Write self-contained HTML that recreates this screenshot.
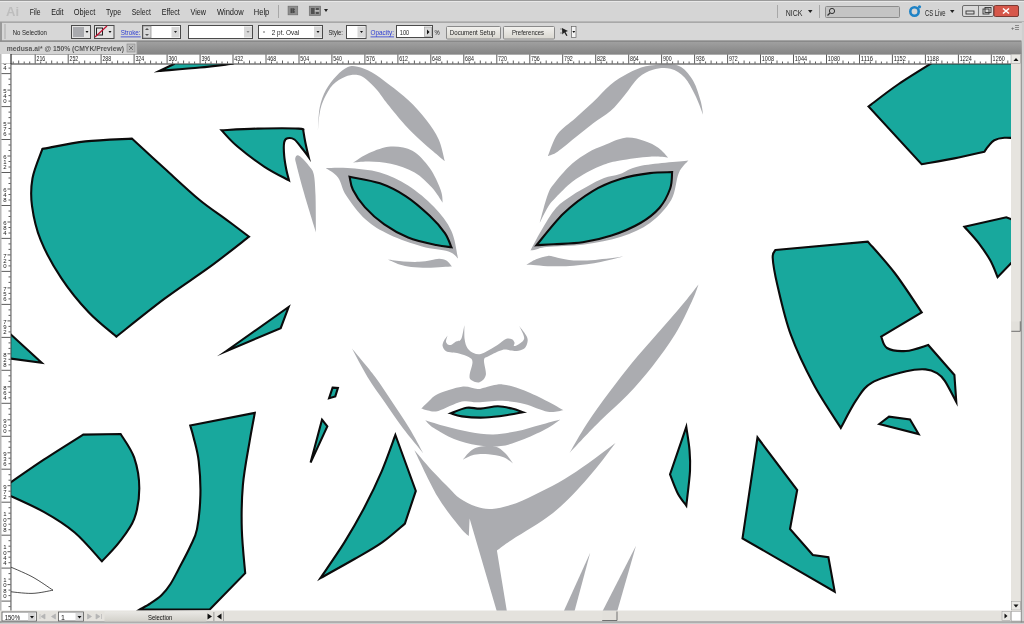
<!DOCTYPE html><html><head><meta charset="utf-8"><style>html,body{margin:0;padding:0;width:1024px;height:624px;overflow:hidden;background:#d6d6d6}svg{display:block}text{font-family:"Liberation Sans",sans-serif}svg{will-change:transform}</style></head><body><svg width="1024" height="624" viewBox="0 0 1024 624"><defs><clipPath id="cv"><rect x="11" y="64" width="1000" height="547"/></clipPath><linearGradient id="tabg" x1="0" y1="0" x2="0" y2="1"><stop offset="0" stop-color="#a3a3a3"/><stop offset="1" stop-color="#858585"/></linearGradient><linearGradient id="btn" x1="0" y1="0" x2="0" y2="1"><stop offset="0" stop-color="#f2f1ee"/><stop offset="1" stop-color="#d9d7d0"/></linearGradient><linearGradient id="stat" x1="0" y1="0" x2="0" y2="1"><stop offset="0" stop-color="#e9e8e4"/><stop offset="1" stop-color="#d2d0ca"/></linearGradient></defs><rect x="0" y="0" width="1024" height="22" fill="#d5d5d5"/><rect x="0" y="0" width="1024" height="1" fill="#9a9a9a"/><rect x="0" y="1" width="1024" height="1" fill="#e8e8e8"/><text x="6" y="16" font-size="13" fill="#bdbdbd" font-weight="bold">Ai</text><text x="29.7" y="14.8" font-size="8.8" fill="#1a1a1a" textLength="10.9" lengthAdjust="spacingAndGlyphs">File</text><text x="51.2" y="14.8" font-size="8.8" fill="#1a1a1a" textLength="12.3" lengthAdjust="spacingAndGlyphs">Edit</text><text x="73.8" y="14.8" font-size="8.8" fill="#1a1a1a" textLength="21.5" lengthAdjust="spacingAndGlyphs">Object</text><text x="106" y="14.8" font-size="8.8" fill="#1a1a1a" textLength="15.0" lengthAdjust="spacingAndGlyphs">Type</text><text x="131.8" y="14.8" font-size="8.8" fill="#1a1a1a" textLength="19.0" lengthAdjust="spacingAndGlyphs">Select</text><text x="161.7" y="14.8" font-size="8.8" fill="#1a1a1a" textLength="18.0" lengthAdjust="spacingAndGlyphs">Effect</text><text x="190.5" y="14.8" font-size="8.8" fill="#1a1a1a" textLength="15.5" lengthAdjust="spacingAndGlyphs">View</text><text x="216.9" y="14.8" font-size="8.8" fill="#1a1a1a" textLength="26.7" lengthAdjust="spacingAndGlyphs">Window</text><text x="253.8" y="14.8" font-size="8.8" fill="#1a1a1a" textLength="15.5" lengthAdjust="spacingAndGlyphs">Help</text><rect x="278" y="5" width="1" height="13" fill="#a8a8a8"/><rect x="288.1" y="6.2" width="9.6" height="8.6" fill="#8e8e8e" stroke="#6e6e6e" stroke-width="0.7"/><rect x="290.5" y="8.3" width="2" height="4.8" fill="#4a4a4a"/><path d="M292.5,8.3h1.5l1,1.2l-1,1.2l1.2,1.2l-1.2,1.2h-1.5z" fill="#4a4a4a"/><rect x="309.3" y="6.2" width="11.3" height="9.2" fill="#8e8e8e" stroke="#6e6e6e" stroke-width="0.7"/><rect x="311" y="8" width="3.6" height="6" fill="#505050"/><rect x="316" y="8" width="2.8" height="2.2" fill="#505050"/><rect x="316" y="11.8" width="2.8" height="2.2" fill="#505050"/><rect x="314.8" y="10.4" width="4.5" height="1" fill="#dcdcdc"/><path d="M324,9h4l-2,3z" fill="#222"/><rect x="777" y="5" width="1" height="13" fill="#a8a8a8"/><text x="785.8" y="15.5" font-size="8.8" fill="#2a2a2a" textLength="16.7" lengthAdjust="spacingAndGlyphs">NICK</text><path d="M808,10h4.5l-2.25,3z" fill="#222"/><rect x="819" y="5" width="1" height="13" fill="#a8a8a8"/><rect x="825.5" y="6.5" width="74" height="11" rx="1" fill="#c4c4c4" stroke="#8c8c8c" stroke-width="1"/><circle cx="832" cy="11" r="2.6" fill="none" stroke="#333" stroke-width="1"/><path d="M830,13l-2.5,2.5" stroke="#333" stroke-width="1.2"/><circle cx="914.5" cy="11.5" r="4.2" fill="none" stroke="#1f83c6" stroke-width="2.6"/><circle cx="919.5" cy="6.8" r="1.6" fill="#1f83c6"/><text x="925" y="15.5" font-size="8.5" fill="#1e1e1e" textLength="20.6" lengthAdjust="spacingAndGlyphs">CS Live</text><path d="M950,10h4.5l-2.25,3z" fill="#222"/><rect x="962.5" y="5.5" width="31" height="11" rx="1.5" fill="#d8d8d8" stroke="#6a6a6a"/><rect x="978" y="6" width="1" height="10" fill="#777"/><rect x="966" y="11" width="8" height="3" fill="none" stroke="#333" stroke-width="0.9"/><rect x="983" y="9" width="6" height="5" fill="none" stroke="#333" stroke-width="0.9"/><rect x="985" y="7.5" width="6" height="5" fill="none" stroke="#333" stroke-width="0.9"/><rect x="994" y="5.5" width="24.5" height="11" rx="1.5" fill="#d6574a" stroke="#7a3a33"/><path d="M1003,8.5l6,5M1009,8.5l-6,5" stroke="#fff" stroke-width="1.6"/><rect x="0" y="22" width="1024" height="19" fill="#d7d7d7"/><rect x="0" y="21.6" width="1024" height="1" fill="#8a8a8a"/><rect x="0" y="22" width="2" height="19" fill="#9a9a9a"/><rect x="4" y="24" width="2" height="15" fill="#c2c2c2"/><text x="12.7" y="34.8" font-size="7.6" fill="#1e1e1e" textLength="34.2" lengthAdjust="spacingAndGlyphs">No Selection</text><rect x="71.5" y="25.5" width="19" height="13" fill="#e3e3e3" stroke="#4a4a4a"/><rect x="73" y="27" width="11" height="10" fill="#a9aaae"/><path d="M85.5,31h3l-1.5,2z" fill="#111"/><rect x="94.5" y="25.5" width="19.5" height="13" fill="#e3e3e3" stroke="#4a4a4a"/><rect x="96.5" y="28" width="6" height="7" fill="none" stroke="#222" stroke-width="1"/><path d="M95,37 L107,26" stroke="#c01030" stroke-width="1.2"/><path d="M108.5,31h3l-1.5,2z" fill="#111"/><text x="120.7" y="34.8" font-size="7.6" fill="#2b3bd3" textLength="19.9" lengthAdjust="spacingAndGlyphs">Stroke:</text><rect x="120.7" y="36.5" width="20" height="0.8" fill="#2b3bd3"/><rect x="142.5" y="25.5" width="38" height="13" fill="#fff" stroke="#4a4a4a"/><rect x="143" y="26" width="8" height="12" fill="#d8d8d8" stroke="#777" stroke-width="0.6"/><path d="M145,30h4l-2,-2zM145,34h4l-2,2z" fill="#555"/><rect x="171.5" y="27" width="8" height="10.5" fill="#d8d8d8"/><path d="M174,31h3l-1.5,2z" fill="#222"/><rect x="188.5" y="25.5" width="64" height="13" fill="#fff" stroke="#4a4a4a"/><rect x="244" y="26.5" width="8" height="11" fill="#d8d8d8"/><path d="M246.5,31h3l-1.5,2z" fill="#888"/><rect x="258.5" y="25.5" width="64" height="13" fill="#fff" stroke="#4a4a4a"/><circle cx="264" cy="32" r="0.8" fill="#555"/><text x="271.8" y="34.8" font-size="7.6" fill="#1e1e1e" textLength="27.3" lengthAdjust="spacingAndGlyphs">2 pt. Oval</text><rect x="314" y="26.5" width="8" height="11" fill="#d8d8d8"/><path d="M316.5,31h3l-1.5,2z" fill="#111"/><text x="328.4" y="34.8" font-size="7.6" fill="#1e1e1e" textLength="14.6" lengthAdjust="spacingAndGlyphs">Style:</text><rect x="346.5" y="25.5" width="19.5" height="13" fill="#fff" stroke="#4a4a4a"/><rect x="357.5" y="26.5" width="8" height="11" fill="#d8d8d8"/><path d="M360,31h3l-1.5,2z" fill="#111"/><text x="370.5" y="34.8" font-size="7.6" fill="#2b3bd3" textLength="23.5" lengthAdjust="spacingAndGlyphs">Opacity:</text><rect x="370.5" y="36.5" width="23.5" height="0.8" fill="#2b3bd3"/><rect x="396.5" y="25.5" width="36" height="12" fill="#fff" stroke="#4a4a4a"/><text x="399.8" y="34.5" font-size="7.3" fill="#1e1e1e" textLength="9.4" lengthAdjust="spacingAndGlyphs">100</text><rect x="424.5" y="27" width="7" height="9.5" fill="#d8d8d8" stroke="#888" stroke-width="0.5"/><path d="M427,29.5v5l2.5,-2.5z" fill="#111"/><text x="434.5" y="34.8" font-size="7.6" fill="#1e1e1e" textLength="5.2" lengthAdjust="spacingAndGlyphs">%</text><rect x="446.5" y="26.5" width="54" height="12.5" rx="1" fill="url(#btn)" stroke="#8a8a8a"/><text x="449.8" y="35.3" font-size="7.6" fill="#1e1e1e" textLength="45.7" lengthAdjust="spacingAndGlyphs">Document Setup</text><rect x="503.5" y="26.5" width="51" height="12.5" rx="1" fill="url(#btn)" stroke="#8a8a8a"/><text x="511.9" y="35.3" font-size="7.6" fill="#1e1e1e" textLength="32.1" lengthAdjust="spacingAndGlyphs">Preferences</text><path d="M562,28l6,3l-2.5,1l2,3.5l-1.2,.6l-2,-3.5l-2,2z" fill="#222"/><path d="M560,29h2M560,33h2" stroke="#777" stroke-width="0.8"/><rect x="571.5" y="26.5" width="4.5" height="11" fill="#f4f4f4" stroke="#666" stroke-width="0.7"/><path d="M572.3,31h3l-1.5,2z" fill="#111"/><text x="1011" y="29.5" font-size="6" fill="#555">+</text><path d="M1015,25.5h4M1015,27.5h4M1015,29.5h4" stroke="#666" stroke-width="0.7"/><rect x="0" y="40.5" width="1024" height="13.5" fill="url(#tabg)"/><rect x="0" y="41.5" width="137" height="12.5" fill="#d3d3d3"/><rect x="0" y="40.6" width="1021" height="1" fill="#7a7a7a"/><rect x="136.5" y="41.5" width="0.8" height="12.5" fill="#a0a0a0"/><text x="6.8" y="51" font-size="8" fill="#565656" font-weight="bold" textLength="117.2" lengthAdjust="spacingAndGlyphs">medusa.ai* @ 150% (CMYK/Preview)</text><rect x="127" y="44" width="8" height="8" fill="#bbb" stroke="#888" stroke-width="0.6"/><path d="M129,46l4,4M133,46l-4,4" stroke="#666" stroke-width="0.8"/><rect x="0" y="54" width="1024" height="570" fill="#fff"/><g clip-path="url(#cv)"><path d="M317.9,130.5C318.2,126.7 318.4,114.3 319.7,107.6C321,100.8 323.1,95.3 325.9,90C328.7,84.7 332.7,79.7 336.4,75.9C340.1,72.1 344.4,68.5 347.9,67C351.4,65.5 353.6,65.8 357.6,66.7C361.6,67.6 366.4,69.3 371.7,72.3C377,75.3 383.1,80 389.3,84.7C395.5,89.4 402.5,94.6 408.7,100.5C414.9,106.4 421.3,113.4 426.3,119.9C431.3,126.4 435.5,132.4 438.6,139.3C441.7,146.2 443.8,157.6 444.8,161.3C442.9,159.7 437.6,155.3 433.3,151.6C429.1,147.9 424,143.7 419.3,139.3C414.6,134.9 410.5,131.1 405.2,125.2C399.9,119.3 392.2,109.9 387.5,104C382.8,98.1 380.5,94.1 377,90C373.5,85.9 369.6,81.9 366.4,79.4C363.2,76.9 361.1,75.5 357.6,75C354.1,74.5 349.3,75.1 345.2,76.7C341.1,78.3 336.4,81 332.9,84.7C329.4,88.4 326.3,94.1 324.1,98.8C321.9,103.5 320.7,107.6 319.7,112.9C318.7,118.2 318.2,127.6 317.9,130.5Z" fill="#abacb0"/><path d="M352.9,162.7C355.6,161.1 362.8,155.7 369.1,153C375.4,150.3 383.6,146.9 390.8,146.5C398,146.1 405.9,147.2 412.4,150.8C418.9,154.4 425,161.6 429.7,168.1C434.4,174.6 438.4,184 440.6,189.8C442.8,195.6 442.4,200.6 442.7,202.8C440.9,200.3 436.6,192.7 431.9,187.6C427.2,182.5 421.5,176.5 414.6,172.5C407.8,168.5 398.4,165.6 390.8,163.8C383.2,162 375.4,161.8 369.1,161.6C362.8,161.4 355.6,162.5 352.9,162.7Z" fill="#abacb0"/><path d="M325.8,168.1C329.4,168.1 338.5,167.4 347.5,168.1C356.5,168.8 369.9,169.6 380,172.5C390.1,175.4 399.1,179.7 408.1,185.5C417.1,191.3 426.9,199.5 434.1,207.1C441.3,214.7 447.4,222.4 451.4,231C455.4,239.6 456.9,253.9 458,258.5C456.4,257.3 454.5,253.5 448.5,251.5C442.5,249.5 431.8,249.3 422,246.5C412.2,243.7 399,239.3 389.6,234.8C380.2,230.3 372.8,226.2 365.6,219.6C358.4,213 350.8,202.5 346.2,195.5C341.6,188.5 341.4,182.1 338,177.5C334.6,172.9 327.8,169.7 325.8,168.1Z" fill="#abacb0"/><path d="M387.8,259.5C390.4,259.8 398.2,261 403.4,261.4C408.6,261.8 414.4,262 419,261.8C423.6,261.6 427.4,260.7 430.8,260.2C434.2,259.7 436.8,258.6 439.4,258.7C442,258.8 444.3,259.3 446.4,260.6C448.5,261.9 451,265.5 451.9,266.5C450.3,266.6 446.7,266.7 442.5,266.9C438.3,267.1 432.1,267.7 426.9,267.7C421.7,267.7 415.8,267.4 411.2,266.9C406.7,266.4 403.4,265.7 399.5,264.5C395.6,263.3 389.8,260.3 387.8,259.5Z" fill="#abacb0"/><path d="M547.9,156.1C549.5,152.4 553,140.4 557.6,134.1C562.2,127.8 569.4,123.5 575.3,118.2C581.2,112.9 587,107.9 592.9,102.3C598.8,96.7 604.6,89.5 610.5,84.7C616.4,79.9 622.3,76.3 628.2,73.2C634.1,70.1 639.3,67.7 645.8,66.2C652.3,64.7 661.1,64.3 667,64.4C672.9,64.5 676.7,64.2 681.1,67C685.5,69.8 690.2,75.6 693.4,81.2C696.6,86.8 698.9,95 700.5,100.6C702.1,106.2 702.7,112.3 703.1,114.7C701.8,111.5 698.3,101.5 695.2,95.3C692.1,89.1 688.7,82 684.6,77.6C680.5,73.2 675.8,70.1 670.5,68.8C665.2,67.5 658.2,68.2 652.9,69.7C647.6,71.2 643.4,73.3 638.7,77.6C634,81.9 629.3,89.7 624.6,95.3C619.9,100.9 615.8,106.4 610.5,111.1C605.2,115.8 598.8,119.1 592.9,123.5C587,127.9 581.2,132.9 575.3,137.6C569.4,142.3 562.2,148.6 557.6,151.7C553,154.8 549.5,155.4 547.9,156.1Z" fill="#abacb0"/><path d="M539.7,222.8C541.1,218 545.3,201 548,194.1C550.7,187.2 552,186.4 556,181.3C560,176.2 566.6,168.5 572,163.7C577.4,158.9 582.8,155.5 588.1,152.4C593.5,149.3 597.9,147.6 604.1,145.2C610.3,142.8 618.5,138.4 625.2,137.7C631.9,137 638.9,139.2 644.5,140.9C650.1,142.6 654.6,145.1 658.6,147.9C662.6,150.7 666.7,156 668.3,157.6C665.2,157.4 657.8,156.2 649.8,156.7C641.8,157.2 627.6,159.1 620,160.4C612.4,161.7 609.4,162.6 604.1,164.5C598.8,166.4 593.5,168.8 588.1,171.7C582.8,174.6 577.4,177.8 572,182.1C566.6,186.4 560,193.2 556,197.3C552,201.4 550.7,202.7 548,206.9C545.3,211.2 541.1,220.2 539.7,222.8Z" fill="#abacb0"/><path d="M530.5,250.5C532.2,247.2 536.8,238.1 541,231C545.2,223.9 550.8,213.9 556,208C561.2,202.1 566.6,199.2 572,195.5C577.4,191.8 582.8,188.9 588.1,186C593.5,183.1 598.8,180.1 604.1,178.1C609.4,176.1 614,176.1 620,174.1C626,172.1 628.7,168.2 640.1,166C651.5,163.8 680.4,161.5 688.4,160.6C686.8,162.7 681.7,166.4 678.8,173C675.9,179.6 676,191.7 671.2,200C666.4,208.3 658.3,216.9 650,223C641.7,229.1 632.1,233.2 621.2,236.8C610.3,240.4 596.8,242.8 584.4,244.5C572,246.2 555,246.2 546.9,247C538.8,247.8 538.7,248.9 536,249.5C533.3,250.1 531.4,250.3 530.5,250.5Z" fill="#abacb0"/><path d="M526.4,264.7C528,263.8 532.5,260.8 536.1,259.3C539.7,257.8 544.3,256.2 547.9,255.9C551.5,255.6 553.3,256.9 557.6,257.7C561.9,258.4 567.4,260 573.7,260.4C580,260.8 587,260.5 595.2,259.9C603.4,259.3 618.5,257.2 623.1,256.6C619.4,257.5 608.8,260.5 600.6,262C592.4,263.5 581.8,265.1 573.7,265.8C565.6,266.5 558.5,266.4 552.2,266.3C545.9,266.2 540.4,265.5 536.1,265.2C531.8,264.9 528,264.8 526.4,264.7Z" fill="#abacb0"/><path d="M316,232.5C314,225.9 307.2,204.2 304,193C300.8,181.8 297.9,170.8 296.5,165C295.1,159.2 295.1,159.6 295.3,158C295.6,156.4 296.7,155.1 298,155.3C299.3,155.5 301.2,157.2 303,159C304.8,160.8 307.2,163.5 309,166C310.8,168.5 312.6,169.2 313.7,174C314.8,178.8 315.1,185.2 315.5,195C315.9,204.8 315.9,226.2 316,232.5Z" fill="#abacb0"/><path d="M447.6,335.4C447.3,336.4 445.9,339.8 446,341.4C446.1,343 447.5,344.3 448.5,344.8C449.5,345.3 450.8,345.1 452,344.5C453.2,343.9 454.7,342.1 456,341.5C457.3,340.9 459,341.5 460,340.6C461,339.7 461.5,338.6 462.2,336C462.9,333.4 464,327 464.4,325.2C464.4,327.5 464.1,335.2 464.6,339C465.1,342.8 466,345.9 467.5,348.2C469,350.5 471.5,352 473.5,353C475.5,354 477.5,354.4 479.5,354.2C481.5,354 482.5,353.5 485.5,352C488.5,350.5 494.1,347.2 497.5,345C500.9,342.8 503.5,339.9 505.9,339C508.3,338.1 510.5,338.7 511.9,339.3C513.3,339.9 514.1,341.5 514.5,342.6C514.9,343.7 513.2,345.8 514,346C514.8,346.2 517.4,345.3 519.1,344C520.8,342.7 524.2,341 524.2,338C524.2,335 520,327.8 519.1,325.8C520.4,327.7 525.7,334 527,337C528.3,340 527.5,342.1 527,344C526.5,345.9 525.7,347.5 524,348.7C522.3,349.9 518.9,350.7 516.7,351C514.5,351.3 513.1,350.7 510.7,350.5C508.3,350.3 505.9,349 502.3,349.9C498.7,350.8 492.1,354.2 489,355.9C485.9,357.6 484.5,356.8 484,360C483.5,363.2 486.6,371.4 485.8,375.1C485.1,378.8 481.9,381.5 479.5,382.3C477.1,383.1 472.8,381.1 471.1,379.9C469.5,378.7 469.4,378.1 469.6,375.1C469.8,372.1 472.6,365 472.5,362C472.4,359 470.9,358.5 468.7,357.1C466.4,355.7 461.8,354.2 459,353.5C456.2,352.8 454.2,353 452,352.6C449.8,352.2 447.4,352.1 445.8,351C444.2,349.9 442.9,347.7 442.6,346C442.3,344.3 443,342.8 443.8,341C444.6,339.2 447,336.3 447.6,335.4Z" fill="#abacb0"/><path d="M421.3,408.6C422.4,407.5 425.1,404.5 428,402C430.9,399.5 432.8,396.3 438.4,393.8C444,391.2 455.4,387.5 461.9,386.7C468.4,385.9 473.6,388.9 477.5,389C481.4,389.1 481.1,388.3 485.3,387.5C489.5,386.7 496,383.9 502.5,384.4C509,384.9 516.9,387.7 524.4,390.6C531.9,393.5 541.3,398.3 547.8,401.6C554.3,404.9 560.8,408.8 563.4,410.2C560.8,410.4 554.3,412.8 547.8,411.7C541.3,410.6 531.9,405.7 524.4,403.9C516.9,402.1 510.3,401.1 502.5,400.8C494.7,400.5 484.3,402.2 477.5,402.3C470.7,402.4 468.4,400.2 461.9,401.6C455.4,403 444,409.4 438.4,410.9C432.8,412.4 430.9,410.9 428,410.5C425.1,410.1 422.4,408.9 421.3,408.6Z" fill="#abacb0"/><path d="M425.2,420.3C428.7,421.4 438.8,424.7 446.2,426.6C453.7,428.6 461.9,430.7 469.7,432C477.5,433.3 485.3,434.5 493.1,434.4C500.9,434.3 508.8,432.8 516.6,431.2C524.4,429.7 532.7,427 540,425C547.3,423 556.9,420.4 560.3,419.5C558.2,420.9 553.8,424.8 547.8,428.1C541.8,431.4 532.2,436.1 524.4,439.1C516.6,442.1 508.7,445.1 500.9,446.1C493.1,447.1 485.3,446.5 477.5,445.3C469.7,444.1 461.3,442 454,439.1C446.7,436.2 438.6,431.2 433.8,428.1C428.9,425 426.6,421.6 425.2,420.3Z" fill="#abacb0"/><path d="M463,459.5C464.2,458.2 467.4,453.6 470,451.5C472.6,449.4 474.6,447.8 478.8,447C483,446.2 490.6,445.5 495,446.5C499.4,447.5 502,450.2 505,453C508,455.8 511.7,461.7 513,463.4C511.3,462.3 507,458.6 502.9,457.1C498.8,455.6 493.3,454.6 488.5,454.2C483.7,453.8 478.2,453.8 474,454.7C469.8,455.6 464.8,458.7 463,459.5Z" fill="#abacb0"/><path d="M352,348.6C354.6,353.3 362.1,368.1 367.5,377C372.9,385.9 378.7,393.5 384.6,402C390.5,410.5 396.4,419.5 402.8,428C409.2,436.5 419.8,449 423.2,453.2C420.9,449 414.4,436.5 409.2,428C404,419.5 397.9,410.5 392.2,402C386.5,393.5 381.9,385.9 375.2,377C368.5,368.1 355.9,353.3 352,348.6Z" fill="#abacb0"/><path d="M698.5,284.4C695.7,287.9 688.8,297 681.9,305.3C675,313.6 665.3,324.5 657,334.1C648.7,343.7 639.8,353.4 631.9,363C624,372.6 617.1,381.7 609.6,391.8C602.1,401.9 593.4,413.7 586.7,423.9C580,434.1 572.5,448 569.6,452.8C574.7,447.4 590.6,430.3 600.3,420.7C609.9,411.1 618.8,404.1 627.5,395C636.2,385.9 644.5,376.3 652.5,366.2C660.5,356.1 668.8,344.8 675.3,334.1C681.8,323.4 687.7,310.3 691.6,302C695.5,293.7 697.4,287.3 698.5,284.4Z" fill="#abacb0"/><path d="M414.4,450.2C417.8,454.1 428.8,467 434.6,473.3C440.4,479.6 444.8,483.8 449,488C453.2,492.2 455.5,495.4 460,498.5C464.5,501.6 470.6,504.8 476,506.5C481.4,508.2 485.4,509.4 492.1,508.9C498.8,508.4 508.1,506.1 516.1,503.3C524.1,500.5 532.2,496.1 540.2,492.1C548.2,488.1 556.2,484 564.2,479.2C572.2,474.4 579.8,469.2 588.3,463.2C596.8,457.2 611,446.4 615.5,443C613.4,445.8 607.2,454.2 602.7,460C598.2,465.8 593.4,471.7 588.3,477.6C583.2,483.5 578.1,489.4 572.2,495.3C566.3,501.2 559.7,507.6 553,512.9C546.3,518.2 539.1,522.8 532.1,527.3C525.1,531.8 517.2,536.3 511.3,540.2C505.4,544.1 499.3,548.9 496.9,550.6L507,612L497,612L469.6,518.5L468.8,536.2C467.3,534.7 465.2,533.9 460,527.3C454.8,520.7 445.1,509.2 437.5,496.4C429.9,483.5 418.2,457.9 414.4,450.2Z" fill="#abacb0"/><path d="M590.2,552.7L574.3,612L563.4,612L590.2,552.7Z" fill="#abacb0"/><path d="M636,545.7L617,612L602.1,612L636,545.7Z" fill="#abacb0"/><path d="M42.4,148.9C49.6,147.7 70.5,143.1 85.4,141.4C100.3,139.7 124.2,139.1 131.9,138.6C137.3,143.6 153.4,158.3 164.6,168.5C175.8,178.7 188.7,190.9 199,199.5C209.3,208.1 218.3,213.6 226.6,219.8C234.9,226 245.3,233.9 249,236.7C242.4,241.8 223.5,256.9 209.4,267.2C195.3,277.5 180.1,287.1 164.6,298.7C149.1,310.3 124.4,330.3 116.4,336.6C111.8,332.6 98.1,322.2 88.9,312.5C79.7,302.8 69.3,290.2 61.3,278.1C53.3,266.1 45.6,252.2 40.7,240.2C35.8,228.1 33.4,216.1 32,205.8C30.6,195.5 30.8,187.7 32.5,178.2C34.2,168.7 40.8,153.8 42.4,148.9Z" fill="#18a89d" stroke="#0b0b0b" stroke-width="2.1" stroke-linejoin="miter" stroke-miterlimit="10"/><path d="M6,330L41.7,362.7L6,358L6,330Z" fill="#18a89d" stroke="#0b0b0b" stroke-width="2.1" stroke-linejoin="miter" stroke-miterlimit="10"/><path d="M225.6,351.5L288.6,307L280.7,328.1L225.6,351.5Z" fill="#18a89d" stroke="#0b0b0b" stroke-width="2.1" stroke-linejoin="miter" stroke-miterlimit="10"/><path d="M221.6,130.3C227.6,130 244.9,128.9 257.7,128.6C270.5,128.3 290.9,128.2 298.5,128.6C306.1,128.9 302.5,130.3 303.3,130.7C303.6,132.6 304.4,137.8 305.3,142.2C306.2,146.6 308.1,154.7 308.7,157.2C307.7,155.8 305,151.9 302.6,149C300.2,146.1 296.9,141.3 294.4,139.5C291.9,137.7 289.3,137.8 287.6,138.2C285.9,138.6 284.8,139.2 284.2,142.2C283.6,145.1 283.8,151.3 284.2,155.9C284.6,160.5 285.5,165.4 286.3,169.5C287.1,173.6 288.6,178.6 289,180.4C284.9,178.1 273.1,172.5 264.5,166.8C255.9,161.1 244.3,152.4 237.2,146.3C230,140.2 224.2,133 221.6,130.3Z" fill="#18a89d" stroke="#0b0b0b" stroke-width="2.1" stroke-linejoin="miter" stroke-miterlimit="10"/><path d="M159.3,71L174,64L174,60L240,60L232.6,63.8C227.2,64.4 212.2,66.3 200,67.5C187.8,68.7 166.1,70.4 159.3,71Z" fill="#18a89d" stroke="#0b0b0b" stroke-width="2.1" stroke-linejoin="miter" stroke-miterlimit="10"/><path d="M4,487C10.7,482.4 31,468.1 44.2,459.4C57.4,450.7 76.7,438.7 83.2,434.6L120.6,434C122.9,437.9 131.1,448.6 134.2,457.7C137.3,466.8 139.3,478.1 139.3,488.3C139.3,498.5 137.6,509.8 134.2,518.9C130.8,528 124.3,535.6 118.9,542.7C113.5,549.8 104.7,558.2 101.9,561.3C97.4,556.5 84.3,540.7 74.7,532.5C65.1,524.3 56,518.7 44.2,512.1C32.4,505.5 10.7,496.2 4,493L4,487Z" fill="#18a89d" stroke="#0b0b0b" stroke-width="2.1" stroke-linejoin="miter" stroke-miterlimit="10"/><path d="M190.2,425.5L254.8,412.9C254,417.5 251.7,428.8 249.7,440.8C247.7,452.8 244.2,470.2 242.9,484.9C241.6,499.6 241.4,514.4 241.8,529.1C242.2,543.8 244.6,565.9 245.2,573.2L210,609.3L139.5,609.6C141.3,608.5 146.8,605.7 150.5,603.3C154.2,600.9 158.4,598.2 161.7,595C165,591.8 167.8,588.2 170.5,584C173.2,579.8 174.9,576.2 178.2,570C181.4,563.8 186.9,553.8 190,547C193.1,540.2 195.3,537.8 197,529.1C198.7,520.5 200.1,506.4 200.4,495.1C200.7,483.8 199.8,470.7 198.7,461.1C197.6,451.5 195,443.3 193.6,437.4C192.2,431.5 190.8,427.5 190.2,425.5Z" fill="#18a89d" stroke="#0b0b0b" stroke-width="2.1" stroke-linejoin="miter" stroke-miterlimit="10"/><path d="M332.6,387.6L337.9,388L335.3,396.4L329.1,398.2L332.6,387.6Z" fill="#18a89d" stroke="#0b0b0b" stroke-width="2.1" stroke-linejoin="miter" stroke-miterlimit="10"/><path d="M322,419.7L327.3,426.4L310.6,462.6L322,419.7Z" fill="#18a89d" stroke="#0b0b0b" stroke-width="2.1" stroke-linejoin="miter" stroke-miterlimit="10"/><path d="M395.4,435L415.8,490.9L404.9,523.6C401,526.8 390.2,536.7 381.8,542.6C373.4,548.5 364.7,553.1 354.5,559C344.3,564.9 326.1,574.9 320.4,578.1C324.4,572.1 337,554.3 344.4,542.4C351.8,530.5 358.6,518.5 364.9,506.6C371.1,494.7 376.8,482.7 381.9,470.8C387,458.9 393.1,441 395.4,435Z" fill="#18a89d" stroke="#0b0b0b" stroke-width="2.1" stroke-linejoin="miter" stroke-miterlimit="10"/><path d="M940,58C933.1,62.3 910.6,75.9 898.7,84C886.8,92.1 873.5,102.8 868.5,106.5L921.6,164.2C927,163.2 943.8,160.5 954.3,158.4C964.8,156.3 979.3,152.9 984.3,151.8C985,150.9 986.6,148.1 988.3,146.2C990,144.3 991.6,141.6 994.3,140.2C997,138.8 1000.8,138.1 1004.4,137.8C1008,137.5 1014.1,138.1 1016,138.2L1016,58L940,58Z" fill="#18a89d" stroke="#0b0b0b" stroke-width="2.1" stroke-linejoin="miter" stroke-miterlimit="10"/><path d="M964.4,226.7L1006.3,217.3L1016,221L1016,258L997.6,277.2C996.4,274.4 993.5,266.2 990.4,260.6C987.3,255 983.2,249 978.9,243.3C974.6,237.7 966.8,229.5 964.4,226.7Z" fill="#18a89d" stroke="#0b0b0b" stroke-width="2.1" stroke-linejoin="miter" stroke-miterlimit="10"/><path d="M775.4,250L867.8,241.6C872.3,246.8 885.7,261.2 894.7,273C903.7,284.8 917.2,305.8 921.7,312.4L881.2,336.6C882.2,338.5 882.9,345.6 887,348C891.1,350.4 899.1,351.5 906,351C912.9,350.5 924.5,346 928.2,345L954.4,375L956.3,402C954.4,398.5 948,385.7 944.8,380.9C941.6,376.1 940.2,375.1 937,373.2C933.8,371.3 930.6,369.7 925.5,369.4C920.4,369.1 915.3,369.1 906.3,371.3C897.3,373.5 880,378 871.6,382.8C863.2,387.6 861.3,392.7 856.2,400.2C851.1,407.7 843.4,423.3 840.8,427.9C836.3,420.7 822.2,400.3 813.9,384.8C805.6,369.3 796.9,351.4 790.8,334.7C784.7,318 780.3,297.5 777.3,284.7C774.3,271.9 773,263.5 772.7,257.7C772.4,251.9 775,251.3 775.4,250Z" fill="#18a89d" stroke="#0b0b0b" stroke-width="2.1" stroke-linejoin="miter" stroke-miterlimit="10"/><path d="M879.3,424L889,416.7L910,419.4L918.6,434L879.3,424Z" fill="#18a89d" stroke="#0b0b0b" stroke-width="2.1" stroke-linejoin="miter" stroke-miterlimit="10"/><path d="M686.3,426.9C686.8,430.8 688.9,442.6 689.5,450C690.1,457.4 690.5,461.7 690,471C689.5,480.3 686.9,499.8 686.3,505.6C684.9,503.6 680.5,498.7 677.8,493.5C675.1,488.3 671.3,477.6 670,474.4L686.3,426.9Z" fill="#18a89d" stroke="#0b0b0b" stroke-width="2.1" stroke-linejoin="miter" stroke-miterlimit="10"/><path d="M757.5,437.5L797.2,490L790,529L812.8,555L828.4,557.2L834.7,591.6L742.5,538.4L757.5,437.5Z" fill="#18a89d" stroke="#0b0b0b" stroke-width="2.1" stroke-linejoin="miter" stroke-miterlimit="10"/><path d="M349.6,176.8C354.7,177.9 370.6,180.1 380,183.3C389.4,186.6 397.7,190.9 406,196.3C414.3,201.7 423.2,209.7 429.7,215.8C436.2,221.9 441.3,227.9 444.9,233.1C448.5,238.3 450.3,244.8 451.4,247.2C448.9,246.8 443.4,246.6 436.2,245C429,243.4 416.8,240.8 408.1,237.4C399.5,234 391.5,229.5 384.3,224.4C377.1,219.3 370,212.9 364.8,207.1C359.6,201.3 355.4,194.9 352.9,189.8C350.4,184.8 350.2,179 349.6,176.8Z" fill="#18a89d" stroke="#0b0b0b" stroke-width="2.1" stroke-linejoin="miter" stroke-miterlimit="10"/><path d="M672.1,172.1C671.8,174.8 672.3,182.6 670.2,188.5C668.1,194.4 664.6,201.9 659.6,207.7C654.6,213.4 648.4,218.3 640.4,223C632.4,227.7 621.1,232.4 611.5,235.6C601.9,238.8 592.3,240.9 582.7,242.3C573.1,243.7 561.5,243.7 553.8,244.2C546.1,244.7 539.4,245 536.5,245.2C541,239.9 554.2,222.5 563.5,213.5C572.8,204.5 582.7,197.1 592.3,191.3C601.9,185.5 611.6,181.8 621.2,178.8C630.8,175.8 641.5,174.2 650,173.1C658.5,172 668.4,172.3 672.1,172.1Z" fill="#18a89d" stroke="#0b0b0b" stroke-width="2.1" stroke-linejoin="miter" stroke-miterlimit="10"/><path d="M450.9,413.3C453.5,412.4 461.7,408.6 466.6,407.8C471.6,407 475.4,408.9 480.6,408.6C485.8,408.3 492.6,406.2 497.8,406.2C503,406.2 507.7,407.6 511.9,408.6C516.1,409.6 521,411.6 522.8,412.2C520.5,412.6 515,413.9 508.8,414.8C502.5,415.7 493.1,417.2 485.3,417.5C477.5,417.8 467.6,417.1 461.9,416.4C456.2,415.7 452.7,413.8 450.9,413.3Z" fill="#18a89d" stroke="#0b0b0b" stroke-width="2.1" stroke-linejoin="miter" stroke-miterlimit="10"/><path d="M6,565C10.3,567 24.2,572.5 32,576.7C39.8,580.9 49.5,588 53,590.2C49.5,590.7 39.8,593.2 32,593.4C24.2,593.6 10.3,591.6 6,591.2L6,565Z" fill="none" stroke="#222" stroke-width="0.8"/></g><rect x="0" y="54" width="1011" height="10" fill="#fff"/><rect x="0" y="63.5" width="1011" height="1" fill="#333"/><rect x="0" y="54" width="1024" height="0.8" fill="#9a9a9a"/><text x="36.5" y="61" font-size="7.4" fill="#1a1a1a" textLength="8.8" lengthAdjust="spacingAndGlyphs">216</text><text x="69.5" y="61" font-size="7.4" fill="#1a1a1a" textLength="8.8" lengthAdjust="spacingAndGlyphs">252</text><text x="102.4" y="61" font-size="7.4" fill="#1a1a1a" textLength="8.8" lengthAdjust="spacingAndGlyphs">288</text><text x="135.4" y="61" font-size="7.4" fill="#1a1a1a" textLength="8.8" lengthAdjust="spacingAndGlyphs">324</text><text x="168.4" y="61" font-size="7.4" fill="#1a1a1a" textLength="8.8" lengthAdjust="spacingAndGlyphs">360</text><text x="201.4" y="61" font-size="7.4" fill="#1a1a1a" textLength="8.8" lengthAdjust="spacingAndGlyphs">396</text><text x="234.3" y="61" font-size="7.4" fill="#1a1a1a" textLength="8.8" lengthAdjust="spacingAndGlyphs">432</text><text x="267.3" y="61" font-size="7.4" fill="#1a1a1a" textLength="8.8" lengthAdjust="spacingAndGlyphs">468</text><text x="300.3" y="61" font-size="7.4" fill="#1a1a1a" textLength="8.8" lengthAdjust="spacingAndGlyphs">504</text><text x="333.2" y="61" font-size="7.4" fill="#1a1a1a" textLength="8.8" lengthAdjust="spacingAndGlyphs">540</text><text x="366.2" y="61" font-size="7.4" fill="#1a1a1a" textLength="8.8" lengthAdjust="spacingAndGlyphs">576</text><text x="399.2" y="61" font-size="7.4" fill="#1a1a1a" textLength="8.8" lengthAdjust="spacingAndGlyphs">612</text><text x="432.1" y="61" font-size="7.4" fill="#1a1a1a" textLength="8.8" lengthAdjust="spacingAndGlyphs">648</text><text x="465.1" y="61" font-size="7.4" fill="#1a1a1a" textLength="8.8" lengthAdjust="spacingAndGlyphs">684</text><text x="498.1" y="61" font-size="7.4" fill="#1a1a1a" textLength="8.8" lengthAdjust="spacingAndGlyphs">720</text><text x="531.0" y="61" font-size="7.4" fill="#1a1a1a" textLength="8.8" lengthAdjust="spacingAndGlyphs">756</text><text x="564.0" y="61" font-size="7.4" fill="#1a1a1a" textLength="8.8" lengthAdjust="spacingAndGlyphs">792</text><text x="597.0" y="61" font-size="7.4" fill="#1a1a1a" textLength="8.8" lengthAdjust="spacingAndGlyphs">828</text><text x="630.0" y="61" font-size="7.4" fill="#1a1a1a" textLength="8.8" lengthAdjust="spacingAndGlyphs">864</text><text x="662.9" y="61" font-size="7.4" fill="#1a1a1a" textLength="8.8" lengthAdjust="spacingAndGlyphs">900</text><text x="695.9" y="61" font-size="7.4" fill="#1a1a1a" textLength="8.8" lengthAdjust="spacingAndGlyphs">936</text><text x="728.9" y="61" font-size="7.4" fill="#1a1a1a" textLength="8.8" lengthAdjust="spacingAndGlyphs">972</text><text x="761.8" y="61" font-size="7.4" fill="#1a1a1a" textLength="12.2" lengthAdjust="spacingAndGlyphs">1008</text><text x="794.8" y="61" font-size="7.4" fill="#1a1a1a" textLength="12.2" lengthAdjust="spacingAndGlyphs">1044</text><text x="827.8" y="61" font-size="7.4" fill="#1a1a1a" textLength="12.2" lengthAdjust="spacingAndGlyphs">1080</text><text x="860.8" y="61" font-size="7.4" fill="#1a1a1a" textLength="12.2" lengthAdjust="spacingAndGlyphs">1116</text><text x="893.7" y="61" font-size="7.4" fill="#1a1a1a" textLength="12.2" lengthAdjust="spacingAndGlyphs">1152</text><text x="926.7" y="61" font-size="7.4" fill="#1a1a1a" textLength="12.2" lengthAdjust="spacingAndGlyphs">1188</text><text x="959.7" y="61" font-size="7.4" fill="#1a1a1a" textLength="12.2" lengthAdjust="spacingAndGlyphs">1224</text><text x="992.6" y="61" font-size="7.4" fill="#1a1a1a" textLength="12.2" lengthAdjust="spacingAndGlyphs">1260</text><path d="M13.2,61.5v2M18.7,60.5v3M24.2,61.5v2M29.7,61.5v2M35.2,54.5v9M40.7,61.5v2M46.2,61.5v2M51.7,60.5v3M57.2,61.5v2M62.7,61.5v2M68.2,54.5v9M73.7,61.5v2M79.2,61.5v2M84.7,60.5v3M90.2,61.5v2M95.6,61.5v2M101.1,54.5v9M106.6,61.5v2M112.1,61.5v2M117.6,60.5v3M123.1,61.5v2M128.6,61.5v2M134.1,54.5v9M139.6,61.5v2M145.1,61.5v2M150.6,60.5v3M156.1,61.5v2M161.6,61.5v2M167.1,54.5v9M172.6,61.5v2M178.1,61.5v2M183.6,60.5v3M189.1,61.5v2M194.6,61.5v2M200.1,54.5v9M205.5,61.5v2M211.0,61.5v2M216.5,60.5v3M222.0,61.5v2M227.5,61.5v2M233.0,54.5v9M238.5,61.5v2M244.0,61.5v2M249.5,60.5v3M255.0,61.5v2M260.5,61.5v2M266.0,54.5v9M271.5,61.5v2M277.0,61.5v2M282.5,60.5v3M288.0,61.5v2M293.5,61.5v2M299.0,54.5v9M304.5,61.5v2M309.9,61.5v2M315.4,60.5v3M320.9,61.5v2M326.4,61.5v2M331.9,54.5v9M337.4,61.5v2M342.9,61.5v2M348.4,60.5v3M353.9,61.5v2M359.4,61.5v2M364.9,54.5v9M370.4,61.5v2M375.9,61.5v2M381.4,60.5v3M386.9,61.5v2M392.4,61.5v2M397.9,54.5v9M403.4,61.5v2M408.9,61.5v2M414.4,60.5v3M419.8,61.5v2M425.3,61.5v2M430.8,54.5v9M436.3,61.5v2M441.8,61.5v2M447.3,60.5v3M452.8,61.5v2M458.3,61.5v2M463.8,54.5v9M469.3,61.5v2M474.8,61.5v2M480.3,60.5v3M485.8,61.5v2M491.3,61.5v2M496.8,54.5v9M502.3,61.5v2M507.8,61.5v2M513.3,60.5v3M518.8,61.5v2M524.3,61.5v2M529.8,54.5v9M535.2,61.5v2M540.7,61.5v2M546.2,60.5v3M551.7,61.5v2M557.2,61.5v2M562.7,54.5v9M568.2,61.5v2M573.7,61.5v2M579.2,60.5v3M584.7,61.5v2M590.2,61.5v2M595.7,54.5v9M601.2,61.5v2M606.7,61.5v2M612.2,60.5v3M617.7,61.5v2M623.2,61.5v2M628.7,54.5v9M634.2,61.5v2M639.7,61.5v2M645.1,60.5v3M650.6,61.5v2M656.1,61.5v2M661.6,54.5v9M667.1,61.5v2M672.6,61.5v2M678.1,60.5v3M683.6,61.5v2M689.1,61.5v2M694.6,54.5v9M700.1,61.5v2M705.6,61.5v2M711.1,60.5v3M716.6,61.5v2M722.1,61.5v2M727.6,54.5v9M733.1,61.5v2M738.6,61.5v2M744.1,60.5v3M749.6,61.5v2M755.0,61.5v2M760.5,54.5v9M766.0,61.5v2M771.5,61.5v2M777.0,60.5v3M782.5,61.5v2M788.0,61.5v2M793.5,54.5v9M799.0,61.5v2M804.5,61.5v2M810.0,60.5v3M815.5,61.5v2M821.0,61.5v2M826.5,54.5v9M832.0,61.5v2M837.5,61.5v2M843.0,60.5v3M848.5,61.5v2M854.0,61.5v2M859.5,54.5v9M864.9,61.5v2M870.4,61.5v2M875.9,60.5v3M881.4,61.5v2M886.9,61.5v2M892.4,54.5v9M897.9,61.5v2M903.4,61.5v2M908.9,60.5v3M914.4,61.5v2M919.9,61.5v2M925.4,54.5v9M930.9,61.5v2M936.4,61.5v2M941.9,60.5v3M947.4,61.5v2M952.9,61.5v2M958.4,54.5v9M963.9,61.5v2M969.4,61.5v2M974.8,60.5v3M980.3,61.5v2M985.8,61.5v2M991.3,54.5v9M996.8,61.5v2M1002.3,61.5v2M1007.8,60.5v3" stroke="#333" stroke-width="0.8"/><rect x="0" y="64" width="11" height="547" fill="#fff"/><rect x="0" y="54" width="1.5" height="570" fill="#b8b8b8"/><rect x="10.5" y="54" width="0.9" height="557" fill="#333"/><text x="3.2" y="65.1" font-size="6" fill="#222">0</text><text x="3.2" y="70.3" font-size="6" fill="#222">4</text><text x="3.2" y="92.9" font-size="6" fill="#222">5</text><text x="3.2" y="98.1" font-size="6" fill="#222">4</text><text x="3.2" y="103.3" font-size="6" fill="#222">0</text><text x="3.2" y="125.8" font-size="6" fill="#222">5</text><text x="3.2" y="131.0" font-size="6" fill="#222">7</text><text x="3.2" y="136.2" font-size="6" fill="#222">6</text><text x="3.2" y="158.8" font-size="6" fill="#222">6</text><text x="3.2" y="164.0" font-size="6" fill="#222">1</text><text x="3.2" y="169.2" font-size="6" fill="#222">2</text><text x="3.2" y="191.8" font-size="6" fill="#222">6</text><text x="3.2" y="197.0" font-size="6" fill="#222">4</text><text x="3.2" y="202.2" font-size="6" fill="#222">8</text><text x="3.2" y="224.7" font-size="6" fill="#222">6</text><text x="3.2" y="229.9" font-size="6" fill="#222">8</text><text x="3.2" y="235.1" font-size="6" fill="#222">4</text><text x="3.2" y="257.7" font-size="6" fill="#222">7</text><text x="3.2" y="262.9" font-size="6" fill="#222">2</text><text x="3.2" y="268.1" font-size="6" fill="#222">0</text><text x="3.2" y="290.7" font-size="6" fill="#222">7</text><text x="3.2" y="295.9" font-size="6" fill="#222">5</text><text x="3.2" y="301.1" font-size="6" fill="#222">6</text><text x="3.2" y="323.7" font-size="6" fill="#222">7</text><text x="3.2" y="328.9" font-size="6" fill="#222">9</text><text x="3.2" y="334.1" font-size="6" fill="#222">2</text><text x="3.2" y="356.6" font-size="6" fill="#222">8</text><text x="3.2" y="361.8" font-size="6" fill="#222">2</text><text x="3.2" y="367.0" font-size="6" fill="#222">8</text><text x="3.2" y="389.6" font-size="6" fill="#222">8</text><text x="3.2" y="394.8" font-size="6" fill="#222">6</text><text x="3.2" y="400.0" font-size="6" fill="#222">4</text><text x="3.2" y="422.6" font-size="6" fill="#222">9</text><text x="3.2" y="427.8" font-size="6" fill="#222">0</text><text x="3.2" y="433.0" font-size="6" fill="#222">0</text><text x="3.2" y="455.5" font-size="6" fill="#222">9</text><text x="3.2" y="460.7" font-size="6" fill="#222">3</text><text x="3.2" y="465.9" font-size="6" fill="#222">6</text><text x="3.2" y="488.5" font-size="6" fill="#222">9</text><text x="3.2" y="493.7" font-size="6" fill="#222">7</text><text x="3.2" y="498.9" font-size="6" fill="#222">2</text><text x="3.2" y="516.3" font-size="6" fill="#222">1</text><text x="3.2" y="521.5" font-size="6" fill="#222">0</text><text x="3.2" y="526.7" font-size="6" fill="#222">0</text><text x="3.2" y="531.9" font-size="6" fill="#222">8</text><text x="3.2" y="549.2" font-size="6" fill="#222">1</text><text x="3.2" y="554.5" font-size="6" fill="#222">0</text><text x="3.2" y="559.6" font-size="6" fill="#222">4</text><text x="3.2" y="564.9" font-size="6" fill="#222">4</text><text x="3.2" y="582.2" font-size="6" fill="#222">1</text><text x="3.2" y="587.4" font-size="6" fill="#222">0</text><text x="3.2" y="592.6" font-size="6" fill="#222">8</text><text x="3.2" y="597.8" font-size="6" fill="#222">0</text><path d="M8.5,68.1h2M1.5,73.6h9M8.5,79.1h2M8.5,84.6h2M7.5,90.1h3M8.5,95.6h2M8.5,101.1h2M1.5,106.6h9M8.5,112.1h2M8.5,117.6h2M7.5,123.1h3M8.5,128.5h2M8.5,134.0h2M1.5,139.5h9M8.5,145.0h2M8.5,150.5h2M7.5,156.0h3M8.5,161.5h2M8.5,167.0h2M1.5,172.5h9M8.5,178.0h2M8.5,183.5h2M7.5,189.0h3M8.5,194.5h2M8.5,200.0h2M1.5,205.5h9M8.5,211.0h2M8.5,216.5h2M7.5,222.0h3M8.5,227.5h2M8.5,233.0h2M1.5,238.4h9M8.5,243.9h2M8.5,249.4h2M7.5,254.9h3M8.5,260.4h2M8.5,265.9h2M1.5,271.4h9M8.5,276.9h2M8.5,282.4h2M7.5,287.9h3M8.5,293.4h2M8.5,298.9h2M1.5,304.4h9M8.5,309.9h2M8.5,315.4h2M7.5,320.9h3M8.5,326.4h2M8.5,331.9h2M1.5,337.4h9M8.5,342.9h2M8.5,348.4h2M7.5,353.8h3M8.5,359.3h2M8.5,364.8h2M1.5,370.3h9M8.5,375.8h2M8.5,381.3h2M7.5,386.8h3M8.5,392.3h2M8.5,397.8h2M1.5,403.3h9M8.5,408.8h2M8.5,414.3h2M7.5,419.8h3M8.5,425.3h2M8.5,430.8h2M1.5,436.3h9M8.5,441.8h2M8.5,447.3h2M7.5,452.8h3M8.5,458.2h2M8.5,463.7h2M1.5,469.2h9M8.5,474.7h2M8.5,480.2h2M7.5,485.7h3M8.5,491.2h2M8.5,496.7h2M1.5,502.2h9M8.5,507.7h2M8.5,513.2h2M7.5,518.7h3M8.5,524.2h2M8.5,529.7h2M1.5,535.2h9M8.5,540.7h2M8.5,546.2h2M7.5,551.7h3M8.5,557.2h2M8.5,562.7h2M1.5,568.1h9M8.5,573.6h2M8.5,579.1h2M7.5,584.6h3M8.5,590.1h2M8.5,595.6h2M1.5,601.1h9M8.5,606.6h2" stroke="#333" stroke-width="0.8"/><rect x="0" y="54" width="10.5" height="9.5" fill="#fff"/><rect x="0" y="54" width="1.5" height="10" fill="#b8b8b8"/><rect x="10.5" y="54" width="0.9" height="10" fill="#333"/><rect x="1011" y="54" width="13" height="570" fill="#e6e4df"/><rect x="1011" y="54.5" width="9.5" height="9" fill="#e9e8e4" stroke="#999" stroke-width="0.5"/><path d="M1013.5,61h5l-2.5,-3z" fill="#111"/><rect x="1011.3" y="321.5" width="9" height="10" fill="#e2e0db"/><path d="M1011.3,331.3h9v-10" fill="none" stroke="#707070" stroke-width="1"/><rect x="1011.5" y="601.5" width="9" height="8.5" fill="#e9e8e4" stroke="#999" stroke-width="0.5"/><path d="M1013.5,604.5h5l-2.5,3z" fill="#111"/><rect x="1020.8" y="54" width="1" height="570" fill="#7a7a7a"/><rect x="1021.8" y="22" width="2.2" height="602" fill="#cfcfcf"/><rect x="0" y="610.5" width="1021" height="11" fill="#e4e2dd"/><rect x="0" y="621.5" width="1024" height="1.2" fill="#777"/><rect x="0" y="622.7" width="1024" height="1.3" fill="#cfcfcf"/><rect x="2" y="612" width="34.5" height="9" fill="#fff" stroke="#555" stroke-width="0.8"/><text x="4.7" y="619.5" font-size="7" fill="#111" textLength="15.3" lengthAdjust="spacingAndGlyphs">150%</text><rect x="28" y="613" width="7.5" height="7.5" fill="#d8d8d8"/><path d="M30,616h4l-2,2.5z" fill="#111"/><path d="M40,614v5M45,614l-4,2.5l4,2.5zM55.5,614l-4,2.5l4,2.5z" fill="#b5b5b5" stroke="#b5b5b5" stroke-width="0.7"/><rect x="58.5" y="612" width="25" height="9" fill="#fff" stroke="#555" stroke-width="0.8"/><text x="61" y="619.5" font-size="7" fill="#111">1</text><rect x="75.5" y="613" width="7.5" height="7.5" fill="#d8d8d8"/><path d="M77.5,616h4l-2,2.5z" fill="#111"/><path d="M87.5,614l4,2.5l-4,2.5zM96,614l4,2.5l-4,2.5zM101.5,614v5" fill="#b5b5b5" stroke="#b5b5b5" stroke-width="0.7"/><rect x="104.5" y="611.5" width="102" height="10" fill="url(#stat)"/><text x="148" y="619.5" font-size="7.5" fill="#111" textLength="24.3" lengthAdjust="spacingAndGlyphs">Selection</text><path d="M207.5,613.5l4.5,3l-4.5,3z" fill="#111"/><rect x="213.5" y="612" width="0.8" height="9" fill="#888"/><path d="M221.5,613.5l-4.5,3l4.5,3z" fill="#111"/><rect x="223" y="611.5" width="0.8" height="9.5" fill="#999"/><rect x="602.2" y="611.5" width="14.8" height="9" fill="#e2e0db"/><path d="M602.2,620.5h14.8v-9" fill="none" stroke="#707070" stroke-width="1"/><rect x="1002" y="611.5" width="8.5" height="9" fill="#e9e8e4" stroke="#999" stroke-width="0.5"/><path d="M1004.5,613.5l3,2.5l-3,2.5z" fill="#111"/><rect x="1011.5" y="611.5" width="9.5" height="9.5" fill="#fff" stroke="#999" stroke-width="0.5"/></svg></body></html>
